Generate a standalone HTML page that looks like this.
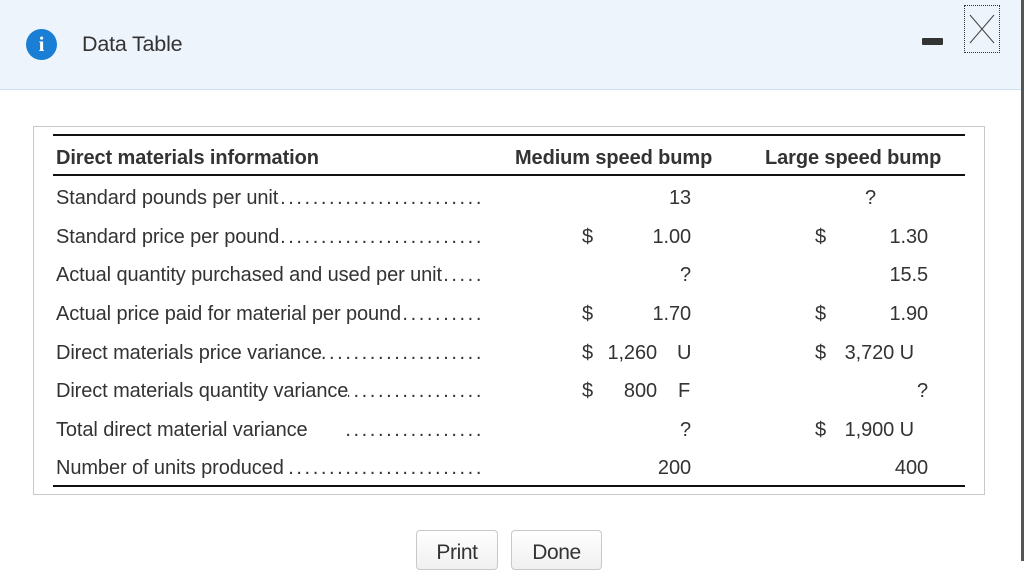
<!DOCTYPE html>
<html><head><meta charset="utf-8"><style>
*{margin:0;padding:0;box-sizing:border-box}
body{width:1024px;height:561px;overflow:hidden;background:#fff;position:relative;font-family:"Liberation Sans",Arial,sans-serif;color:#333}
.hdr{position:absolute;left:0;top:0;width:1024px;height:90px;background:#eef4fc;border-bottom:1px solid #c9e2f6}
.ico{position:absolute;left:26px;top:29px;width:31px;height:31px;border-radius:50%;background:#1a7fd4;color:#fff;font:bold 21px "Liberation Serif",serif;text-align:center;line-height:31px}
.title{position:absolute;left:82px;top:32px;font-size:21.5px;color:#333;letter-spacing:-0.2px}
.min{position:absolute;left:922px;top:38px;width:21px;height:7px;background:#333;border-radius:1px}
.cls{position:absolute;left:964px;top:5px;width:36px;height:48px;border:1px dotted #333}
.rb{position:absolute;right:0;top:0;width:3px;height:561px;background:#555}
.box{position:absolute;left:33px;top:126px;width:952px;height:369px;border:1px solid #c8c8c8}
.rule{position:absolute;left:53px;width:912px;background:#111}
.t{position:absolute;font-size:20px;line-height:22px;white-space:nowrap;letter-spacing:-0.1px}
.b{font-weight:bold}
.r{position:absolute;font-size:20px;line-height:22px;white-space:nowrap;text-align:right;letter-spacing:-0.1px}
.lab{position:absolute;left:56px;width:428px;display:flex;font-size:20px;line-height:22px;white-space:nowrap;letter-spacing:-0.1px}
.dots{flex:1;overflow:hidden;direction:rtl;letter-spacing:2.6px;padding-left:1px}
.btn{position:absolute;top:530px;height:40px;border:1px solid #c8c8c8;border-radius:4px;background:linear-gradient(#fff,#f0f0f0);font-size:21px;text-align:center;line-height:44px;color:#333;letter-spacing:-0.4px}
</style></head><body>
<div class="hdr">
<div class="ico">i</div>
<div class="title">Data Table</div>
<div class="min"></div>
<div class="cls"><svg width="36" height="48" style="position:absolute;left:-1px;top:-1px"><path d="M6 10 L30 38 M30 10 L6 38" stroke="#444" stroke-width="1" fill="none"/></svg></div>
</div>
<div class="rb"></div>
<div class="box"></div>
<div class="rule" style="top:134px;height:2px"></div>
<div class="rule" style="top:174px;height:2px"></div>
<div class="rule" style="top:485px;height:2px"></div>
<div class="t b" style="left:56px;top:147px">Direct materials information</div>
<div class="t b" style="left:515px;top:147px">Medium speed bump</div>
<div class="t b" style="left:765px;top:147px">Large speed bump</div>

<div class="lab" style="top:187px"><span>Standard pounds per unit</span><span class="dots">....................................</span></div>
<div class="lab" style="top:226px"><span>Standard price per pound</span><span class="dots">....................................</span></div>
<div class="lab" style="top:264px"><span>Actual quantity purchased and used per unit</span><span class="dots">....................................</span></div>
<div class="lab" style="top:303px"><span>Actual price paid for material per pound</span><span class="dots">....................................</span></div>
<div class="lab" style="top:342px"><span>Direct materials price variance</span><span class="dots">....................................</span></div>
<div class="lab" style="top:380px"><span>Direct materials quantity variance</span><span class="dots">....................................</span></div>
<div class="lab" style="top:419px"><span>Total direct material variance</span><span class="dots" style="max-width:140px;margin-left:auto">....................</span></div>
<div class="lab" style="top:457px"><span>Number of units produced</span><span class="dots">....................................</span></div>

<div class="r" style="right:333px;top:187px">13</div>
<div class="t" style="left:582px;top:226px">$</div><div class="r" style="right:333px;top:226px">1.00</div>
<div class="r" style="right:333px;top:264px">?</div>
<div class="t" style="left:582px;top:303px">$</div><div class="r" style="right:333px;top:303px">1.70</div>
<div class="t" style="left:582px;top:342px">$</div><div class="r" style="right:367px;top:342px">1,260</div><div class="t" style="left:677px;top:342px">U</div>
<div class="t" style="left:582px;top:380px">$</div><div class="r" style="right:367px;top:380px">800</div><div class="t" style="left:678px;top:380px">F</div>
<div class="r" style="right:333px;top:419px">?</div>
<div class="r" style="right:333px;top:457px">200</div>

<div class="r" style="right:148px;top:187px">?</div>
<div class="t" style="left:815px;top:226px">$</div><div class="r" style="right:96px;top:226px">1.30</div>
<div class="r" style="right:96px;top:264px">15.5</div>
<div class="t" style="left:815px;top:303px">$</div><div class="r" style="right:96px;top:303px">1.90</div>
<div class="t" style="left:815px;top:342px">$</div><div class="r" style="right:110px;top:342px">3,720 U</div>
<div class="r" style="right:96px;top:380px">?</div>
<div class="t" style="left:815px;top:419px">$</div><div class="r" style="right:110px;top:419px">1,900 U</div>
<div class="r" style="right:96px;top:457px">400</div>

<div class="btn" style="left:416px;width:82px">Print</div>
<div class="btn" style="left:511px;width:91px">Done</div>
</body></html>
